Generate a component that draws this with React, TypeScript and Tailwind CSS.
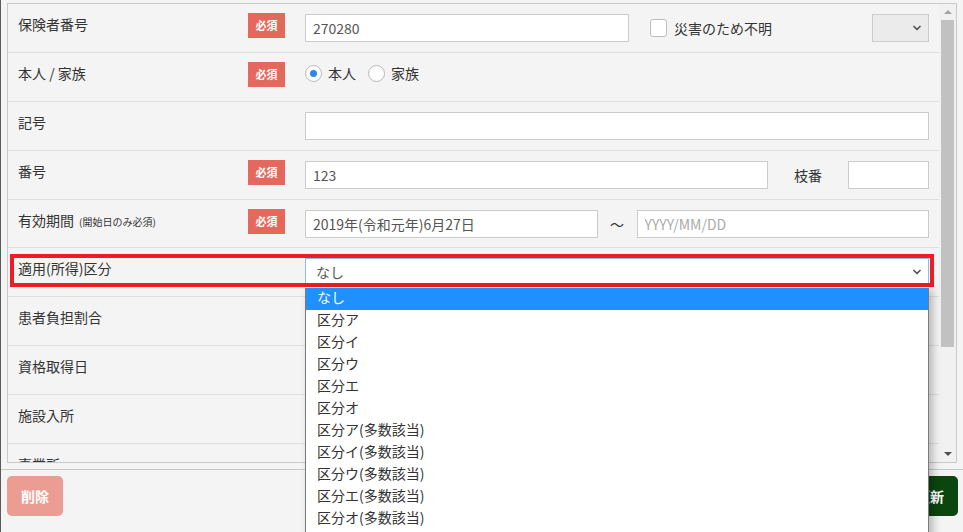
import { ChevronDown } from "lucide-react";

const options = [
  "なし",
  "区分ア",
  "区分イ",
  "区分ウ",
  "区分エ",
  "区分オ",
  "区分ア(多数該当)",
  "区分イ(多数該当)",
  "区分ウ(多数該当)",
  "区分エ(多数該当)",
  "区分オ(多数該当)",
  "区分カ",
];

function Row({ label, sub, required, children }: { label: string; sub?: string; required?: boolean; children?: React.ReactNode }) {
  return (
    <div className="flex h-[48.9px] shrink-0 border-b border-[#dedede] pl-[10px] pr-[10px]">
      <div className="w-[230px] shrink-0 pt-[10px] leading-5">
        {label}
        {sub && <span className="ml-[5px] text-[10px]">{sub}</span>}
      </div>
      <div className="w-[57px] shrink-0 pt-[9px]">
        {required && (
          <span className="flex h-[25px] w-[37px] items-center justify-center bg-[#e4695c] text-[11px] font-bold text-white">
            必須
          </span>
        )}
      </div>
      <div className="flex min-w-0 flex-1 items-start pt-[10px]">{children}</div>
    </div>
  );
}

function TextInput({ value, placeholder, className }: { value?: string; placeholder?: string; className?: string }) {
  return (
    <input
      defaultValue={value}
      placeholder={placeholder}
      readOnly
      className={
        "h-[28px] min-w-0 border border-[#cccccc] bg-white px-[7px] text-[14px] leading-[26px] text-[#555] outline-none placeholder:text-[#aaa] " +
        (className ?? "")
      }
    />
  );
}

function Radio({ checked, label }: { checked?: boolean; label: string }) {
  return (
    <div className="flex items-center">
      <span className="flex h-[17px] w-[17px] items-center justify-center rounded-full border border-[#b8b8b8] bg-white">
        {checked && <span className="h-[7px] w-[7px] rounded-full bg-[#2a8ae8]" />}
      </span>
      <span className="ml-[6px]">{label}</span>
    </div>
  );
}

export default function App() {
  return (
    <div className="relative h-[532px] w-[963px] overflow-hidden border-l border-[#5a5a5a] bg-[#f4f4f4] font-['Noto_Sans_CJK_JP','Noto_Sans',sans-serif] text-[14px] text-[#333]">
      {/* scroll area */}
      <div className="ml-[6px] mt-[3px] flex h-[460px] w-[950px] border border-[#c9c9c9]">
        <div className="flex w-[931px] flex-col overflow-hidden">
          <Row label="保険者番号" required>
            <TextInput value="270280" className="w-[324px]" />
            <div className="ml-[21px] flex h-[28px] items-center">
              <span className="h-[18px] w-[17px] rounded-[3px] border border-[#bdbdbd] bg-white" />
              <span className="ml-[7px]">災害のため不明</span>
            </div>
            <div className="ml-auto flex h-[28px] w-[57px] items-center justify-end border border-[#cccccc] bg-[#ebebeb] pr-[5px]">
              <ChevronDown size={12} strokeWidth={3.5} className="text-[#555]" />
            </div>
          </Row>
          <Row label="本人 / 家族" required>
            <div className="flex h-[22px] items-center gap-[12px]">
              <Radio checked label="本人" />
              <Radio label="家族" />
            </div>
          </Row>
          <Row label="記号">
            <TextInput className="flex-1" />
          </Row>
          <Row label="番号" required>
            <TextInput value="123" className="flex-1" />
            <span className="mx-[26px] leading-[28px]">枝番</span>
            <TextInput className="w-[81px]" />
          </Row>
          <Row label="有効期間" sub="(開始日のみ必須)" required>
            <TextInput value="2019年(令和元年)6月27日" className="flex-1" />
            <span className="w-[39px] text-center leading-[28px]">～</span>
            <TextInput placeholder="YYYY/MM/DD" className="flex-1" />
          </Row>
          <Row label="適用(所得)区分">
            <div className="flex h-[28px] flex-1 items-center justify-between border border-[#8cbcea] bg-white pl-[10px] pr-[5px] text-[#555]">
              <span>なし</span>
              <ChevronDown size={12} strokeWidth={3.5} className="text-[#555]" />
            </div>
          </Row>
          <Row label="患者負担割合" />
          <Row label="資格取得日" />
          <Row label="施設入所" />
          <Row label="事業所" />
        </div>
        {/* scrollbar */}
        <div className="flex w-[17px] flex-col bg-[#f1f1f1]">
          <div className="flex h-[16px] items-center justify-center">
            <span className="h-0 w-0 border-x-[4px] border-b-[4px] border-x-transparent border-b-[#a3a3a3]" />
          </div>
          <div className="mx-[2px] h-[327px] bg-[#c1c1c1]" />
          <div className="flex-1" />
          <div className="flex h-[17px] items-center justify-center">
            <span className="h-0 w-0 border-x-[4px] border-t-[4px] border-x-transparent border-t-[#505050]" />
          </div>
        </div>
      </div>

      {/* footer */}
      <div className="mt-[6px] border-t border-[#c8c8c8] pt-[6px]">
        <div className="flex justify-between pl-[6px] pr-[5px]">
          <button className="h-[40px] w-[56px] rounded-[5px] bg-[#eb9d94] font-bold text-white">削除</button>
          <button className="h-[40px] w-[56px] rounded-[5px] bg-[#0b460e] font-bold text-white">更新</button>
        </div>
      </div>

      {/* annotation */}
      <div className="absolute left-[9px] top-[254px] h-[33px] w-[924px] border-[4px] border-[#ee1c24]" />

      {/* open select list */}
      <div className="absolute left-[304px] top-[288px] w-[624px] border-x border-[#7a7a7a] bg-white shadow-[4px_2px_8px_rgba(0,0,0,0.25)]">
        {options.map((o, i) => (
          <div
            key={o}
            className={"h-[22px] pl-[11px] leading-[18px] " + (i === 0 ? "bg-[#1e90ff] text-white" : "text-[#333]")}
          >
            {o}
          </div>
        ))}
      </div>
    </div>
  );
}
